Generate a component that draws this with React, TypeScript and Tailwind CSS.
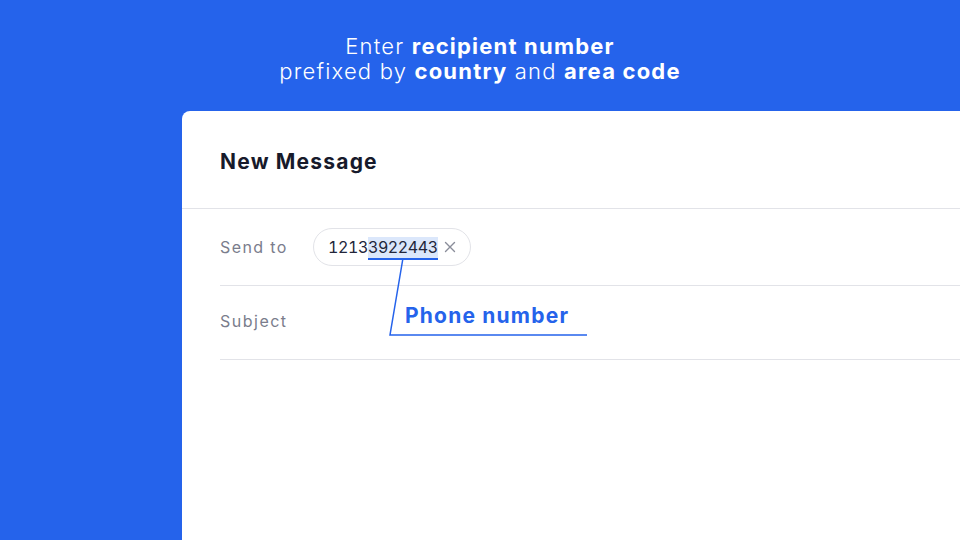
import React from "react";

export default function App() {
  return (
    <div
      className="relative w-[960px] h-[540px] overflow-hidden bg-[#2563eb] flex flex-col"
      style={{ fontFamily: "Inter, 'Open Sans', sans-serif" }}
    >
      <div className="pt-[34px] text-center text-white text-[22px] leading-[25px] tracking-[1.2px]">
        <div className="font-light">
          Enter <span className="font-bold">recipient number</span>
        </div>
        <div className="font-light">
          prefixed by <span className="font-bold">country</span> and{" "}
          <span className="font-bold">area code</span>
        </div>
      </div>

      <div className="mt-[27px] ml-[182px] flex-1 bg-white rounded-tl-[8px] flex flex-col">
        <div className="h-[98px] px-[38px] pt-[4px] flex items-center border-b border-[#e2e3e8]">
          <span className="text-[21px] font-bold text-[#171a2b] tracking-[1.2px]">New Message</span>
        </div>
        <div className="ml-[38px] h-[77px] flex items-center border-b border-[#e2e3e8]">
          <span className="w-[93px] text-[16px] text-[#7a7d8c] tracking-[1.4px]">Send to</span>
          <div className="h-[38px] pl-[14px] pr-[14px] flex items-center gap-[6px] rounded-full border border-[#e2e3e8] text-[16px] text-[#22253a] tabular-nums tracking-[-0.4px]">
            <span>
              1213
              <span className="bg-[#dbe7fb] border-b-2 border-[#2563eb] pb-[1px]">3922443</span>
            </span>
            <svg width="12" height="12" viewBox="0 0 12 12" className="text-[#8a8d9a]">
              <path d="M1.5 1.5L10.5 10.5M10.5 1.5L1.5 10.5" stroke="currentColor" strokeWidth="1.4" strokeLinecap="round" />
            </svg>
          </div>
        </div>
        <div className="ml-[38px] h-[74px] pb-[3px] flex items-center border-b border-[#e2e3e8]">
          <span className="text-[16px] text-[#7a7d8c] tracking-[1.5px]">Subject</span>
        </div>
        <div className="flex-1" />
      </div>

      <svg className="absolute left-0 top-0" width="960" height="540" viewBox="0 0 960 540" fill="none">
        <path d="M403 258L390 335H587" stroke="#2563eb" strokeWidth="1.5" />
      </svg>
      <div className="absolute left-[405px] top-[302px] text-[21px] font-bold text-[#2563eb] tracking-[1.2px] leading-[28px]">
        Phone number
      </div>
    </div>
  );
}
